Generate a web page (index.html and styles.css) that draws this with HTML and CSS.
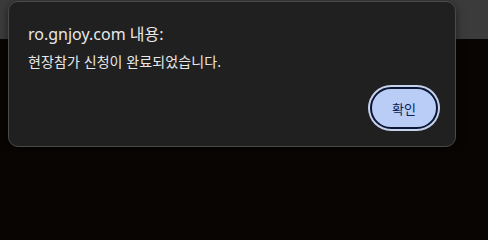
FILE: index.html
```html
<!DOCTYPE html>
<html lang="ko">
<head>
<meta charset="utf-8">
<link rel="stylesheet" href="styles.css">
</head>
<body>
<div class="page">
  <div class="topband"></div>
  <div class="content"></div>
</div>
<div class="dialog">
  <div class="title">ro.gnjoy.com 내용:</div>
  <div class="message">현장참가 신청이 완료되었습니다.</div>
  <div class="actions">
    <button class="ok">확인</button>
  </div>
</div>
</body>
</html>
```

FILE: styles.css
```css
html, body {
  margin: 0;
  padding: 0;
  width: 488px;
  height: 226px;
  overflow: hidden;
  background: #080503;
  font-family: "Noto Sans", "Noto Sans CJK KR", sans-serif;
}
.page {
  display: flex;
  flex-direction: column;
  height: 226px;
}
.topband {
  height: 39px;
  background: #3b3b3b;
}
.content {
  flex: 1;
  background: #080503;
}
.dialog {
  position: absolute;
  left: 8px;
  top: 1px;
  width: 446px;
  height: 144px;
  box-sizing: content-box;
  background: #202020;
  border: 1px solid #4a4a4a;
  border-radius: 10px;
  box-shadow: 0 2px 8px rgba(0,0,0,0.5);
  padding: 0;
  display: flex;
  flex-direction: column;
}
.title {
  margin: 21px 0 0 19px;
  font-size: 16px;
  line-height: 22px;
  color: #e8e8e8;
}
.message {
  margin: 7px 0 0 19px;
  font-size: 14px;
  line-height: 19px;
  color: #e8e8e8;
  letter-spacing: 0.1px;
}
.actions {
  display: flex;
  justify-content: flex-end;
  margin-top: auto;
  padding: 0 17px 17px 0;
}
.ok {
  width: 68px;
  height: 42px;
  box-sizing: border-box;
  border: 2px solid #0c1833;
  border-radius: 21px;
  box-shadow: 0 0 0 2px #c6d3ef;
  background: #b9cdf6;
  color: #0a2052;
  font-family: "Noto Sans CJK KR", sans-serif;
  font-size: 13px;
  padding: 0;
}
```
